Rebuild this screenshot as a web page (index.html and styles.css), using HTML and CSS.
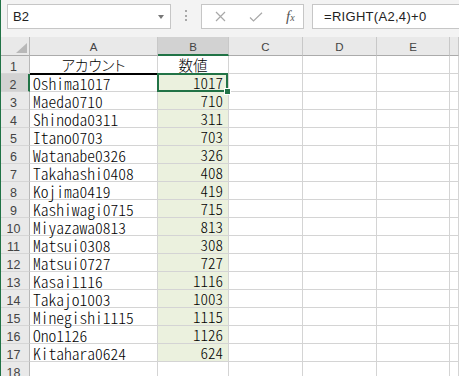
FILE: index.html
```html
<!DOCTYPE html>
<html lang="ja">
<head>
    <meta charset="UTF-8">
    <title>Book1 - Excel</title>
    <link rel="stylesheet" href="styles.css">
</head>
<body>
    <div class="app">
        <!-- name box + formula bar -->
        <div class="fbar">
            <div class="namebox"><span>B2</span><span class="caret"></span></div>
            <div class="dots"><i></i><i></i><i></i></div>
            <div class="fbtns">
                <svg class="ic-x" width="11" height="11" viewBox="0 0 11 11"><path d="M1 1L10 10M10 1L1 10" stroke="#a8a8a8" stroke-width="1.2" fill="none"/></svg>
                <svg class="ic-ok" width="14" height="10" viewBox="0 0 14 10"><path d="M1 5.5L4.5 9L13 0.8" stroke="#a8a8a8" stroke-width="1.2" fill="none"/></svg>
                <span class="fx">f<span>x</span></span>
            </div>
            <div class="formula">=RIGHT(A2,4)+0</div>
        </div>

        <!-- sheet -->
        <div class="sheet">
            <div class="corner"><svg width="11" height="10" viewBox="0 0 11 10"><path d="M11 0V10H0Z" fill="#b8b8b8"/></svg></div>
            <div class="ch">A</div><div class="ch selcol">B</div><div class="ch">C</div><div class="ch">D</div><div class="ch">E</div><div class="ch"></div>

            <div class="rh">1</div><div class="c a title">アカウント</div><div class="c b1 title">数値</div><div class="c"></div><div class="c"></div><div class="c"></div><div class="c"></div>

            <div class="rh selrow">2</div><div class="c a">Oshima1017</div><div class="c b cur">1017<span class="selbox"><i class="handle"></i></span></div><div class="c"></div><div class="c"></div><div class="c"></div><div class="c"></div>
            <div class="rh">3</div><div class="c a">Maeda0710</div><div class="c b">710</div><div class="c"></div><div class="c"></div><div class="c"></div><div class="c"></div>
            <div class="rh">4</div><div class="c a">Shinoda0311</div><div class="c b">311</div><div class="c"></div><div class="c"></div><div class="c"></div><div class="c"></div>
            <div class="rh">5</div><div class="c a">Itano0703</div><div class="c b">703</div><div class="c"></div><div class="c"></div><div class="c"></div><div class="c"></div>
            <div class="rh">6</div><div class="c a">Watanabe0326</div><div class="c b">326</div><div class="c"></div><div class="c"></div><div class="c"></div><div class="c"></div>
            <div class="rh">7</div><div class="c a">Takahashi0408</div><div class="c b">408</div><div class="c"></div><div class="c"></div><div class="c"></div><div class="c"></div>
            <div class="rh">8</div><div class="c a">Kojima0419</div><div class="c b">419</div><div class="c"></div><div class="c"></div><div class="c"></div><div class="c"></div>
            <div class="rh">9</div><div class="c a">Kashiwagi0715</div><div class="c b">715</div><div class="c"></div><div class="c"></div><div class="c"></div><div class="c"></div>
            <div class="rh">10</div><div class="c a">Miyazawa0813</div><div class="c b">813</div><div class="c"></div><div class="c"></div><div class="c"></div><div class="c"></div>
            <div class="rh">11</div><div class="c a">Matsui0308</div><div class="c b">308</div><div class="c"></div><div class="c"></div><div class="c"></div><div class="c"></div>
            <div class="rh">12</div><div class="c a">Matsui0727</div><div class="c b">727</div><div class="c"></div><div class="c"></div><div class="c"></div><div class="c"></div>
            <div class="rh">13</div><div class="c a">Kasai1116</div><div class="c b">1116</div><div class="c"></div><div class="c"></div><div class="c"></div><div class="c"></div>
            <div class="rh">14</div><div class="c a">Takajo1003</div><div class="c b">1003</div><div class="c"></div><div class="c"></div><div class="c"></div><div class="c"></div>
            <div class="rh">15</div><div class="c a">Minegishi1115</div><div class="c b">1115</div><div class="c"></div><div class="c"></div><div class="c"></div><div class="c"></div>
            <div class="rh">16</div><div class="c a">Ono1126</div><div class="c b">1126</div><div class="c"></div><div class="c"></div><div class="c"></div><div class="c"></div>
            <div class="rh">17</div><div class="c a">Kitahara0624</div><div class="c b">624</div><div class="c"></div><div class="c"></div><div class="c"></div><div class="c"></div>
            <div class="rh">18</div><div class="c a"></div><div class="c"></div><div class="c"></div><div class="c"></div><div class="c"></div><div class="c"></div>
        </div>
    </div>
</body>
</html>
```

FILE: styles.css
```css
body {
    margin: 0;
    font-family: "Liberation Sans", Arial, sans-serif;
    background: #fff;
}

.app {
    border-left: 1px solid #217346;
    height: 376px;
    overflow: hidden;
}

/* formula bar */
.fbar {
    display: flex;
    align-items: flex-start;
    height: 37px;
    padding: 4px 0 0 6px;
    box-sizing: border-box;
    background: #f3f3f3;
}

.namebox {
    width: 164px;
    height: 25px;
    box-sizing: border-box;
    border: 1px solid #c6c6c6;
    background: #fff;
    display: flex;
    align-items: center;
    justify-content: space-between;
    padding: 0 6px 0 5px;
    font-size: 13px;
    color: #222;
}

.caret {
    border-top: 4px solid #777;
    border-left: 3.5px solid transparent;
    border-right: 3.5px solid transparent;
}

.dots {
    display: flex;
    flex-direction: column;
    gap: 2.5px;
    margin: 6px 14px 0 14px;
}

.dots i {
    width: 2px;
    height: 2px;
    background: #a8a8a8;
}

.fbtns {
    width: 103px;
    height: 25px;
    box-sizing: border-box;
    border: 1px solid #c6c6c6;
    background: #fff;
    display: flex;
    align-items: center;
}

.ic-x {
    margin-left: 13px;
}

.ic-ok {
    margin-left: 23px;
}

.fx {
    margin-left: 23px;
    font-family: "Liberation Serif", "Times New Roman", serif;
    font-style: italic;
    font-size: 15px;
    color: #555;
}

.fx span {
    font-size: 10px;
}

.formula {
    flex: 1;
    height: 25px;
    box-sizing: border-box;
    margin-left: 8px;
    border: 1px solid #c6c6c6;
    border-right: none;
    background: #fff;
    display: flex;
    align-items: center;
    padding-left: 11px;
    font-size: 13px;
    letter-spacing: 0.3px;
    color: #222;
}

/* grid */
.sheet {
    display: grid;
    grid-template-columns: 29px 128px 71px 74px 74px 73px 1fr;
    grid-template-rows: 19px;
    grid-auto-rows: 18px;
}

.corner,
.ch,
.rh {
    background: #e9e9e9;
    box-sizing: border-box;
    color: #444;
}

.corner {
    border-right: 1px solid #b8b8b8;
    border-bottom: 1px solid #ababab;
    display: flex;
    justify-content: flex-end;
    align-items: flex-end;
    padding: 0 2px 2px 0;
}

.ch {
    border-right: 1px solid #c8c8c8;
    border-bottom: 1px solid #ababab;
    text-align: center;
    font-size: 11.5px;
    line-height: 15px;
    padding-top: 3px;
}

.ch.selcol {
    background: #d2d2d2;
    border-bottom: 2px solid #217346;
}

.rh {
    border-right: 1px solid #b8b8b8;
    border-bottom: 1px solid #d6d6d6;
    text-align: center;
    font-size: 12.5px;
    line-height: 17px;
    padding: 3px 3px 0 0;
}

.rh.selrow {
    background: #d2d2d2;
    border-right: 2px solid #217346;
}

.c {
    box-sizing: border-box;
    border-right: 1px solid #d4d4d4;
    border-bottom: 1px solid #d4d4d4;
    white-space: nowrap;
    font-family: "Noto Sans CJK JP", sans-serif;
    font-weight: 300;
    font-size: 15px;
    line-height: 16px;
    padding-top: 1px;
    color: #000;
}

.c.a {
    font-feature-settings: "hwid" 1;
    font-size: 15.5px;
    padding-left: 3px;
}

.c.title {
    font-feature-settings: "palt" 1;
    font-size: 14.5px;
    text-align: center;
    padding-left: 0;
}

.c.a.title {
    border-bottom: 1px solid #000;
    box-shadow: 0 1px 0 #000;
}

.c.b {
    background: #ebf1de;
    text-align: right;
    padding-right: 5px;
    font-feature-settings: "hwid" 1;
}

.c.cur {
    position: relative;
}

.selbox {
    position: absolute;
    top: -1px;
    left: -1px;
    right: 0;
    bottom: -1px;
    border: 2px solid #217346;
    z-index: 1;
}

.handle {
    position: absolute;
    right: -5px;
    bottom: -5px;
    width: 5px;
    height: 5px;
    background: #217346;
    border: 1px solid #fff;
}
```
